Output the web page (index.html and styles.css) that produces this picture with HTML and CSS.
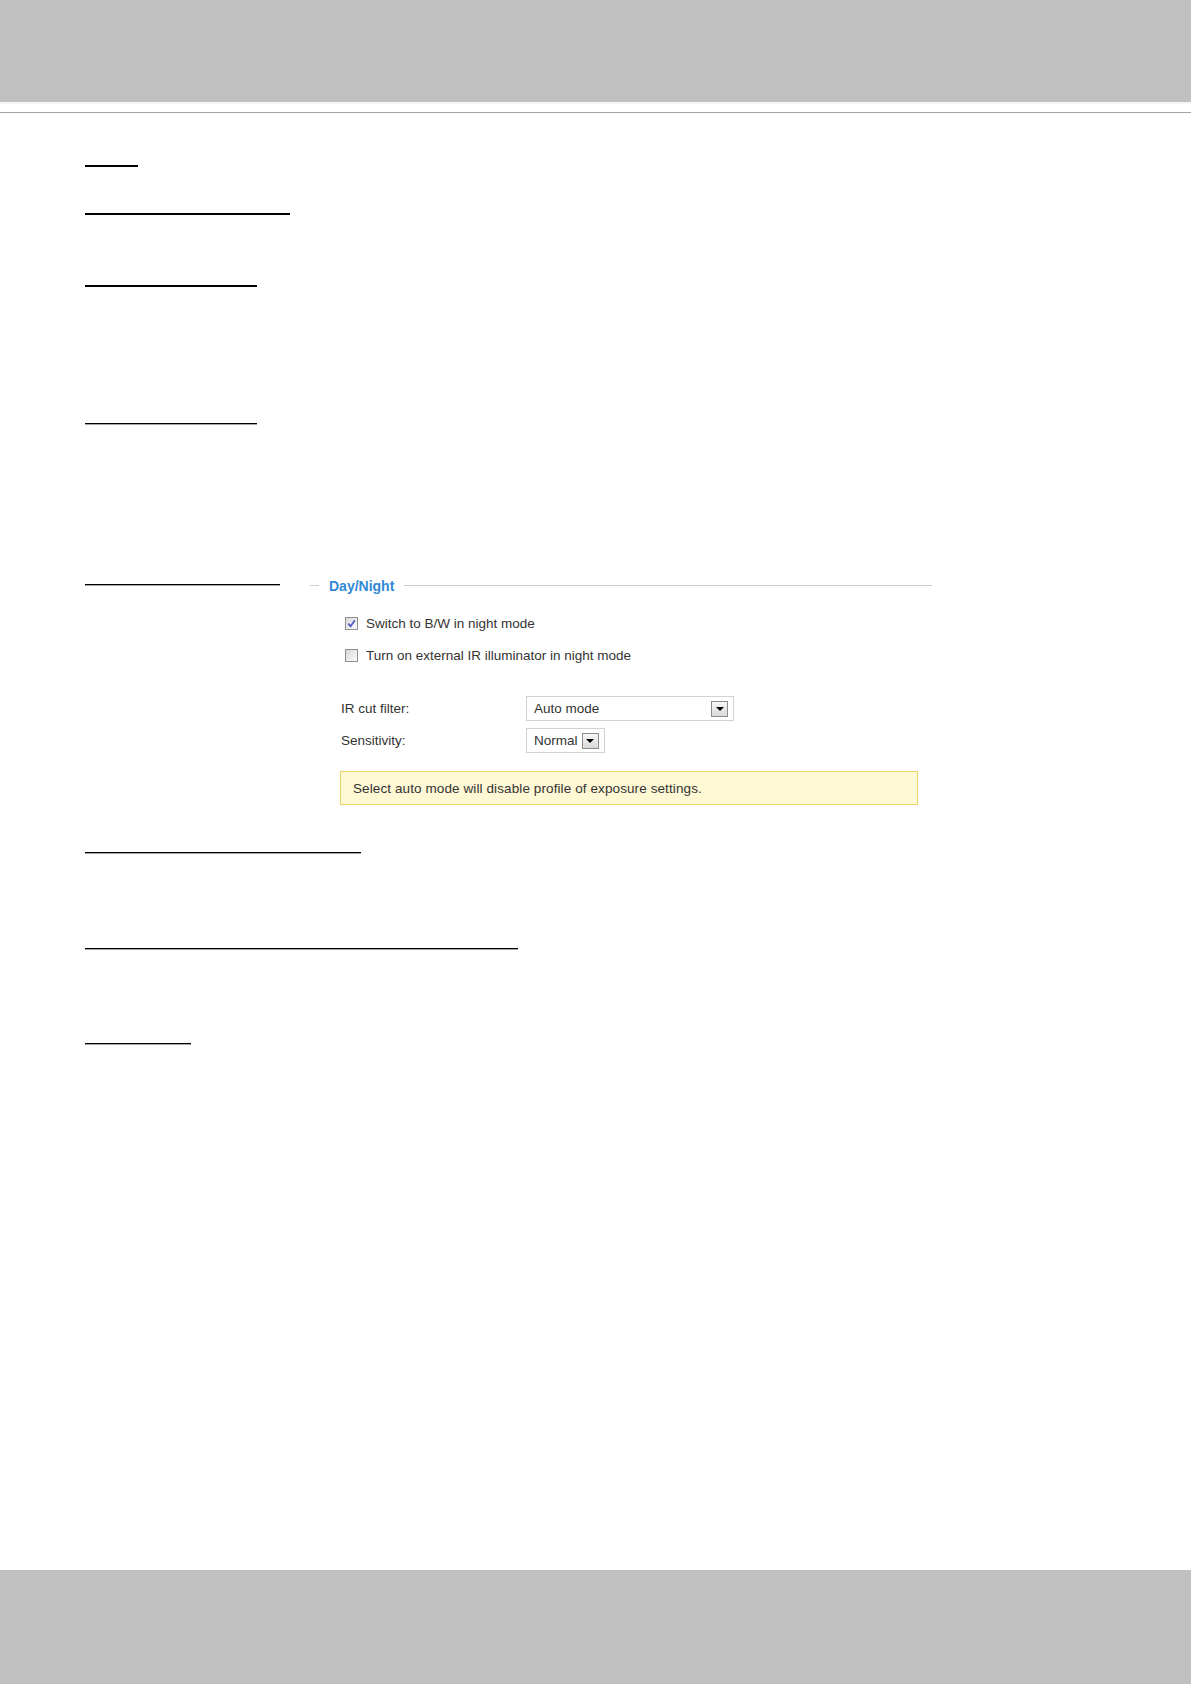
FILE: index.html
```html
<!DOCTYPE html>
<html lang="en">
<head>
  <meta charset="UTF-8">
  <title>Day/Night settings</title>
  <link rel="stylesheet" href="styles.css">
</head>
<body>
  <header class="page-top"></header>
  <div class="page-rule"></div>

  <main class="doc">
    <div class="topic topic-1"></div>
    <div class="topic topic-2"></div>
    <div class="topic topic-3"></div>
    <div class="topic topic-thin topic-4"></div>

    <div class="section">
      <div class="section-side">
        <div class="topic topic-thin topic-5"></div>
      </div>

      <div class="panel">
        <div class="legend"><span>Day/Night</span></div>

        <div class="panel-body">
          <label class="check check-first">
            <span class="box">
              <svg width="11" height="11" viewBox="0 0 11 11"><path d="M2.3 5.6 L4.6 8.3 L8.8 2.2" fill="none" stroke="#4b5cc4" stroke-width="1.7"/></svg>
            </span>
            Switch to B/W in night mode
          </label>
          <label class="check">
            <span class="box"></span>
            Turn on external IR illuminator in night mode
          </label>

          <div class="field field-first">
            <span class="field-label">IR cut filter:</span>
            <div class="select select-wide">
              <span class="select-text">Auto mode</span>
              <span class="select-btn"></span>
            </div>
          </div>
          <div class="field">
            <span class="field-label">Sensitivity:</span>
            <div class="select">
              <span class="select-text">Normal</span>
              <span class="select-btn"></span>
            </div>
          </div>

          <div class="note">Select auto mode will disable profile of exposure settings.</div>
        </div>
      </div>
    </div>

    <div class="topic topic-thin topic-6"></div>
    <div class="topic topic-thin topic-7"></div>
    <div class="topic topic-thin topic-8"></div>
  </main>

  <footer class="page-bottom"></footer>
</body>
</html>
```

FILE: styles.css
```css
body {
  margin: 0;
  min-height: 100vh;
  display: flex;
  flex-direction: column;
  background: #fff;
  color: #333;
  font-family: "Liberation Sans", Arial, sans-serif;
  font-size: 13.5px;
}

.page-top {
  height: 102px;
  background: #c0c0c0;
  border-bottom: 2px solid #f6f6f6;
}

.page-rule {
  margin-top: 8px;
  border-top: 1px solid #a4a4a4;
}

.doc {
  flex: 1;
  padding: 52px 0 0 85px;
}

/* underlined headings */
.topic {
  height: 0;
  border-bottom: 2px solid #000;
}

.topic-thin {
  border-bottom-width: 1px;
  box-shadow: 0 1px 0 rgba(0, 0, 0, 0.35);
}

.topic-1 { width: 53px; }
.topic-2 { width: 205px; margin-top: 46px; }
.topic-3 { width: 172px; margin-top: 70px; }
.topic-4 { width: 172px; margin-top: 136px; }
.topic-5 { width: 195px; margin-top: 7px; }
.topic-6 { width: 276px; margin-top: 47px; }
.topic-7 { width: 433px; margin-top: 95px; }
.topic-8 { width: 106px; margin-top: 94px; }

.section {
  display: flex;
  margin-top: 153px;
}

.section-side {
  width: 225px;
}

/* Day/Night panel */
.panel {
  width: 622px;
}

.legend {
  display: flex;
  align-items: center;
  height: 17px;
  color: #3289d6;
  font-size: 14px;
  font-weight: bold;
}

.legend::before,
.legend::after {
  content: "";
  border-top: 1px solid #cfcfcf;
}

.legend::before {
  width: 9px;
  margin-right: 10px;
}

.legend::after {
  flex: 1;
  margin-left: 10px;
}

.panel-body {
  padding-left: 30px;
}

.check {
  display: flex;
  align-items: center;
  gap: 8px;
  height: 16px;
  margin-top: 16px;
  padding-left: 5px;
}

.check-first {
  margin-top: 21px;
}

.box {
  box-sizing: border-box;
  width: 13px;
  height: 13px;
  display: flex;
  align-items: center;
  justify-content: center;
  border: 1px solid #8f9090;
  background: linear-gradient(135deg, #d8d8d8, #fbfbfb);
}

.field {
  display: flex;
  align-items: center;
  margin-top: 7px;
}

.field-first {
  margin-top: 33px;
}

.field-label {
  width: 185px;
  padding-left: 1px;
}

.select {
  box-sizing: border-box;
  height: 25px;
  display: flex;
  align-items: center;
  gap: 4px;
  padding: 0 5px 0 7px;
  border: 1px solid #d2d2d2;
  background: #fff;
}

.select-wide {
  width: 208px;
}

.select-wide .select-text {
  flex: 1;
}

.select-btn {
  box-sizing: border-box;
  width: 17px;
  height: 16px;
  display: flex;
  align-items: center;
  justify-content: center;
  border: 1px solid #8c8c8c;
  background: linear-gradient(#f7f7f7, #d9d9d9);
}

.select-btn::after {
  content: "";
  border-left: 4px solid transparent;
  border-right: 4px solid transparent;
  border-top: 4px solid #000;
}

.note {
  box-sizing: border-box;
  width: 578px;
  height: 34px;
  display: flex;
  align-items: center;
  margin-top: 18px;
  padding-left: 12px;
  letter-spacing: 0.1px;
  background: #fef9d4;
  border: 1px solid #e9d666;
}

.page-bottom {
  height: 114px;
  background: #c0c0c0;
}
```
